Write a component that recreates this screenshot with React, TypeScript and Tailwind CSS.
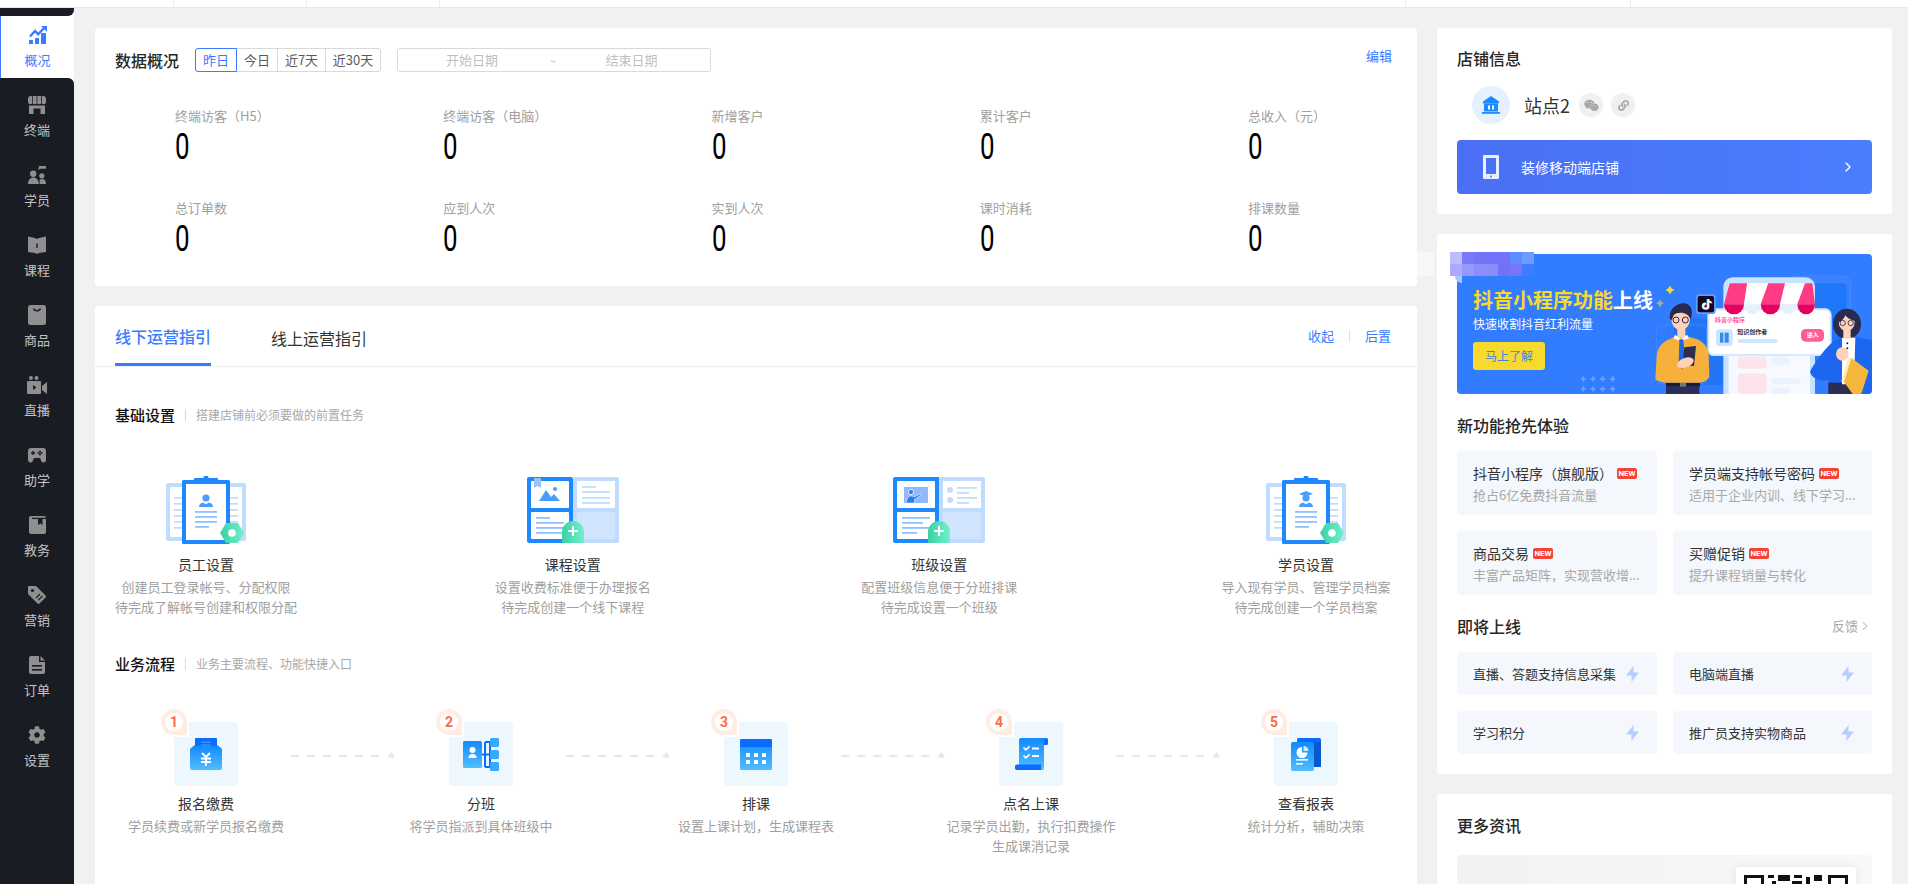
import { ChevronRight } from "lucide-react";
import { FaCog, FaLink, FaTiktok, FaWeixin } from "react-icons/fa";

const fontStack = "font-['Noto_Sans_CJK_SC','Noto_Sans',sans-serif]";
const dark = "#1a1c23";

const TopIcon = () => (
  <svg width="18" height="18" viewBox="0 0 18 18" fill="#3a7bff">
    <rect x="0" y="14" width="4" height="4" rx="0.5" />
    <rect x="6" y="12" width="4" height="6" rx="0.5" />
    <rect x="12" y="7" width="5" height="11" rx="0.5" />
    <path d="M1 10.5 6 5l3.2 3.2L15 2" fill="none" stroke="#3a7bff" strokeWidth="2.4" />
    <path d="M12 0h6v6z" />
  </svg>
);

const navIcons: Record<string, React.ReactNode> = {
  终端: (
    <svg width="18" height="18" viewBox="0 0 18 18" fill="#8f8f8f">
      <path d="M3 0h12a3 3 0 0 1 3 3v3a2.2 2.2 0 0 1-4.5 0 2.2 2.2 0 0 1-4.5 0 2.2 2.2 0 0 1-4.5 0A2.2 2.2 0 0 1 0 6V3a3 3 0 0 1 3-3z" />
      <path d="M4.5 0v6M9 0v6M13.5 0v6" stroke={dark} strokeWidth="0.8" />
      <path d="M1 9.5h16V18h-4.5v-5.5h-7V18H1z" />
    </svg>
  ),
  学员: (
    <svg width="18" height="18" viewBox="0 0 18 18" fill="#8f8f8f">
      <circle cx="5.2" cy="7.8" r="3.2" />
      <path d="M0 18c0-4 2.4-6.5 5.4-6.5s5.4 2.5 5.4 6.5z" />
      <circle cx="13.8" cy="9.8" r="2.6" />
      <path d="M11.5 18c.4-2 .2-3.4-.2-4 1.6-1.2 3.8-1.2 5.2-.3.9.8 1.4 2.4 1.5 4.3z" />
      <path d="M11 0h7v2.8h-5.5L10.300 4z" />
    </svg>
  ),
  课程: (
    <svg width="18" height="18" viewBox="0 0 18 18" fill="#8f8f8f">
      <path d="M0 0.500 7 2l2 1 2-1 7-1.500V16l-7 1-2 1-2-1-7-1z" />
      <rect x="8.300" y="7.500" width="1.400" height="4.500" fill={dark} />
    </svg>
  ),
  商品: (
    <svg width="18" height="20" viewBox="0 0 18 20" fill="#8f8f8f">
      <rect width="18" height="20" rx="2.500" />
      <path d="M5.500 3.500c1 3 6 3 7 0" fill="none" stroke={dark} strokeWidth="1.400" />
    </svg>
  ),
  直播: (
    <svg width="20" height="18" viewBox="0 0 20 18" fill="#8f8f8f">
      <circle cx="4" cy="2" r="2" />
      <circle cx="9.500" cy="2" r="2" />
      <rect y="5" width="14" height="13" rx="1" />
      <path d="M15 10l5-4v12l-5-4z" />
      <path d="M6 9l3.500 2.500L6 14z" fill={dark} />
    </svg>
  ),
  助学: (
    <svg width="18" height="15" viewBox="0 0 18 15" fill="#8f8f8f">
      <path d="M3 0h12a3 3 0 0 1 3 3v9a2.500 2.500 0 0 1-4.700 1.200L12 10H6l-1.300 3.200A2.500 2.500 0 0 1 0 12V3a3 3 0 0 1 3-3z" />
      <path d="M5 3v4M3 5h4" stroke={dark} strokeWidth="1.300" />
      <circle cx="12" cy="3.500" r="1" fill={dark} />
      <circle cx="12" cy="6.500" r="1" fill={dark} />
      <circle cx="10.500" cy="5" r="1" fill={dark} />
      <circle cx="13.500" cy="5" r="1" fill={dark} />
    </svg>
  ),
  教务: (
    <svg width="17" height="18" viewBox="0 0 17 18" fill="#8f8f8f">
      <rect width="17" height="18" rx="2" />
      <path d="M3 2.400h14" stroke={dark} strokeWidth="1.300" />
      <path d="M9 3h4.500v6l-2.200-1.500L9 9z" fill={dark} />
    </svg>
  ),
  营销: (
    <svg width="18" height="18" viewBox="0 0 18 18" fill="#8f8f8f">
      <path d="M1 0h7l9.500 9.500a1.500 1.500 0 0 1 0 2l-6 6a1.500 1.500 0 0 1-2 0L0 8V1a1 1 0 0 1 1-1z" />
      <circle cx="4.500" cy="4.500" r="1.600" fill={dark} />
      <path d="M8 12l4-4M10.500 14l4-4" stroke={dark} strokeWidth="1.100" />
    </svg>
  ),
  订单: (
    <svg width="16" height="18" viewBox="0 0 16 18" fill="#8f8f8f">
      <path d="M0 2a2 2 0 0 1 2-2h8v6h6v10a2 2 0 0 1-2 2H2a2 2 0 0 1-2-2z" />
      <path d="M11.500 0 16 4.500h-4.500z" />
      <rect x="3" y="9" width="10" height="1.600" fill={dark} />
      <rect x="3" y="13" width="10" height="1.600" fill={dark} />
    </svg>
  ),
  设置: <FaCog size={18} color="#8f8f8f" />,
};

const Sidebar = () => (
  <aside className="w-[74px] shrink-0 flex flex-col bg-white">
    <div className="h-2 bg-[#1a1c23] rounded-br-[6px]" />
    <div className="h-[62px] border-l border-[#3a7bff] bg-white flex flex-col items-center pt-[10px]">
      <div className="h-[18px] flex items-center justify-center">
        <TopIcon />
      </div>
      <span className="mt-[6px] text-[13px] leading-5 text-[#3a7bff]">概况</span>
    </div>
    <div className="flex-1 bg-[#1a1c23] rounded-tr-[6px] pt-2 flex flex-col gap-2">
      {Object.keys(navIcons).map((name) => (
        <div key={name} className="h-[62px] flex flex-col items-center pt-[10px]">
          <div className="h-[18px] flex items-center justify-center">{navIcons[name]}</div>
          <span className="mt-[6px] text-[13px] leading-5 text-[#c4c4c4]">{name}</span>
        </div>
      ))}
    </div>
  </aside>
);

const TopBar = () => (
  <div className="h-2 shrink-0 bg-white border-b border-[#e8e8e8] flex">
    <div className="w-[174px] border-r border-[#eeeeee]" />
    <div className="w-[133px] border-r border-[#eeeeee]" />
    <div className="w-[133px] border-r border-[#eeeeee]" />
    <div className="w-[966px] border-r border-[#eeeeee]" />
    <div className="w-[225px] border-r border-[#eeeeee]" />
  </div>
);

const metrics = [
  "终端访客（H5）",
  "终端访客（电脑）",
  "新增客户",
  "累计客户",
  "总收入（元）",
  "总订单数",
  "应到人次",
  "实到人次",
  "课时消耗",
  "排课数量",
];

const DataCard = () => (
  <section className="bg-white rounded-[4px] pt-5 pb-[29px] px-5">
    <div className="flex items-center h-6 relative">
      <h2 className="text-base font-medium text-[#262626] w-20">数据概况</h2>
      <div className="flex text-[13px] text-[#595959] h-6">
        <button className="w-[42px] border border-[#3a7bff] rounded-l-[3px] text-[#3a7bff]">昨日</button>
        <button className="w-[41px] border-y border-r border-[#d9d9d9]">今日</button>
        <button className="w-[48px] border-y border-r border-[#d9d9d9]">近7天</button>
        <button className="w-[55px] border-y border-r border-[#d9d9d9] rounded-r-[3px]">近30天</button>
      </div>
      <div className="ml-4 w-[314px] h-6 border border-[#d9d9d9] rounded-[3px] text-[13px] text-[#bfbfbf] flex items-center">
        <span className="ml-12 w-[53px]">开始日期</span>
        <span className="ml-[51px] text-[10px]">~</span>
        <span className="ml-[50px]">结束日期</span>
      </div>
      <a className="absolute right-[5px] top-[-2px] text-[13px] leading-5 text-[#3a7bff]">编辑</a>
    </div>
    <div className="pt-[34px] pl-[60px] grid grid-cols-[repeat(4,268.250px)_1fr] gap-y-[33px]">
      {metrics.map((m) => (
        <div key={m} className="h-[59px]">
          <div className="text-[13px] leading-5 text-[#a0a0a0]">{m}</div>
          <div className="mt-[3px] h-9 leading-9 text-[36px] text-black font-['Roboto',sans-serif] origin-left scale-x-[0.72]">
            0
          </div>
        </div>
      ))}
    </div>
  </section>
);

const BackPages = () => (
  <>
    <rect x="0" y="7" width="80" height="58" rx="2" fill="#bfdcff" />
    <rect x="4" y="11" width="72" height="50" rx="1" fill="#fff" />
    {[21, 27, 33, 39, 45, 51].map((y) => (
      <g key={y}>
        <rect x="8" y={y} width="9" height="1.700" fill="#bfdcff" />
        <rect x="64" y={y} width="8" height="1.700" fill="#bfdcff" />
      </g>
    ))}
  </>
);

const Clipboard = ({ id, cap }: { id: string; cap?: boolean }) => (
  <svg width="80" height="68" viewBox="0 0 80 68">
    <defs>
      <linearGradient id={id} x1="0" x2="1" y1="0" y2="0">
        <stop offset="0" stopColor="#3cd0a4" />
        <stop offset="1" stopColor="#70f0cc" />
      </linearGradient>
    </defs>
    <BackPages />
    <rect x="16" y="4" width="48" height="64" rx="1.500" fill="#1e88ff" />
    <rect x="20" y="8" width="40" height="56" fill="#fff" />
    <path d="M28 4V3a1 1 0 0 1 1-1h8.500a2.500 2.500 0 0 1 5 0H51a1 1 0 0 1 1 1v1z" fill="#1e88ff" />
    <circle cx="40" cy="22" r="3.600" fill="#4a9cff" />
    <path d="M33 31c0-3 2-4 4.500-4.500l2.500 2 2.500-2c2.500.5 4.500 1.500 4.500 4.500z" fill="#4a9cff" />
    {cap && <path d="M33 18l7-3 7 3-7 2.500z" fill="#4a9cff" />}
    {[35, 40, 45].map((y) => (
      <rect key={y} x="29" y={y} width="22" height="1.800" fill="#8fc0ff" />
    ))}
    <rect x="29" y="50" width="14" height="1.800" fill="#8fc0ff" />
    <path d="M54 57l6-10h12l6 10-6 10H60z" fill={`url(#${id})`} />
    <circle cx="66" cy="57" r="3.800" fill="#fff" />
  </svg>
);

const PlusTab = ({ id }: { id: string }) => (
  <>
    <defs>
      <linearGradient id={id} x1="0" x2="1" y1="0" y2="0">
        <stop offset="0" stopColor="#3cd0a4" />
        <stop offset="1" stopColor="#70f0cc" />
      </linearGradient>
    </defs>
    <path d="M35 66V55a11 11 0 0 1 22 0v11z" fill={`url(#${id})`} />
    <path d="M46 49v10M41 54h10" stroke="#fff" strokeWidth="2" />
  </>
);

const CourseArt = () => (
  <svg width="92" height="66" viewBox="0 0 92 66">
    <rect x="46" width="46" height="66" rx="2" fill="#bfdcff" />
    <rect x="50" y="4" width="38" height="27" fill="#fff" />
    <rect x="50" y="35" width="38" height="27" fill="#d2e5ff" />
    {[14, 20, 25].map((y) => (
      <rect key={y} x="55" y={y} width="28" height="1.800" fill="#bfdcff" />
    ))}
    <rect x="55" y="9" width="14" height="1.800" fill="#bfdcff" />
    <path d="M2 0h42a2 2 0 0 1 2 2v64H2a2 2 0 0 1-2-2V2a2 2 0 0 1 2-2z" fill="#1e88ff" />
    <rect x="4" y="4" width="38" height="27" rx="1" fill="#fff" />
    <rect x="4" y="35" width="38" height="27" rx="1" fill="#fff" />
    <path d="M7 1h7v10l-3.500-2L7 11z" fill="#96c4ff" />
    <path d="M12 24l7-11 5 7 3-3 6 7z" fill="#4a9cff" />
    <circle cx="28" cy="12" r="2" fill="#4a9cff" />
    <rect x="9" y="40" width="14" height="1.800" fill="#8fc0ff" />
    {[45, 50, 55].map((y) => (
      <rect key={y} x="9" y={y} width="28" height="1.800" fill="#8fc0ff" />
    ))}
    <PlusTab id="tabA" />
  </svg>
);

const ClassArt = () => (
  <svg width="92" height="66" viewBox="0 0 92 66">
    <rect x="46" width="46" height="66" rx="2" fill="#bfdcff" />
    <rect x="50" y="4" width="38" height="27" fill="#fff" />
    <rect x="50" y="35" width="38" height="27" fill="#d2e5ff" />
    <circle cx="57" cy="13" r="3" fill="#bfdcff" />
    <circle cx="57" cy="23" r="3" fill="#bfdcff" />
    <rect x="64" y="10" width="20" height="1.800" fill="#bfdcff" />
    <rect x="64" y="15" width="12" height="1.800" fill="#bfdcff" />
    <rect x="64" y="20" width="20" height="1.800" fill="#bfdcff" />
    <rect x="64" y="25" width="12" height="1.800" fill="#bfdcff" />
    <path d="M2 0h44v66H2a2 2 0 0 1-2-2V2a2 2 0 0 1 2-2z" fill="#1e88ff" />
    <rect x="4" y="4" width="38" height="27" rx="1" fill="#fff" />
    <rect x="4" y="35" width="38" height="27" rx="1" fill="#fff" />
    <rect x="11" y="10" width="24" height="16" fill="#8fbaff" />
    <circle cx="18" cy="15" r="2.600" fill="#2d7dea" stroke="#fff" strokeWidth="0.800" />
    <path d="M13 26l2-6c2-1.500 5-1.500 6 0l6-3 .8 1.200-6.300 4.300V26z" fill="#2d7dea" stroke="#fff" strokeWidth="0.500" />
    <rect x="9" y="40" width="28" height="1.800" fill="#8fc0ff" />
    <rect x="9" y="45" width="21" height="1.800" fill="#8fc0ff" />
    <rect x="9" y="50" width="28" height="1.800" fill="#8fc0ff" />
    <rect x="9" y="55" width="15" height="1.800" fill="#8fc0ff" />
    <PlusTab id="tabB" />
  </svg>
);

const setupSteps = [
  { title: "员工设置", lines: ["创建员工登录帐号、分配权限", "待完成了解帐号创建和权限分配"], art: <Clipboard id="hexA" /> },
  { title: "课程设置", lines: ["设置收费标准便于办理报名", "待完成创建一个线下课程"], art: <CourseArt /> },
  { title: "班级设置", lines: ["配置班级信息便于分班排课", "待完成设置一个班级"], art: <ClassArt /> },
  { title: "学员设置", lines: ["导入现有学员、管理学员档案", "待完成创建一个学员档案"], art: <Clipboard id="hexB" cap /> },
];

const GradDefs = ({ id }: { id: string }) => (
  <defs>
    <linearGradient id={id} x1="0" x2="0" y1="0" y2="1">
      <stop offset="0" stopColor="#128aff" />
      <stop offset="1" stopColor="#52bdff" />
    </linearGradient>
  </defs>
);

const flowIcons = [
  <svg width="32" height="32" viewBox="0 0 32 32" key="pay">
    <GradDefs id="fa" />
    <path d="M5 1a1 1 0 0 1 1-1h20a1 1 0 0 1 1 1v9H5z" fill="#0a6bff" />
    <rect x="11" y="3.500" width="10" height="1.400" fill="#4a94ff" />
    <rect x="11" y="6.500" width="10" height="1.400" fill="#4a94ff" />
    <path d="M0 11l4-3.500h24l4 3.500v19a2 2 0 0 1-2 2H2a2 2 0 0 1-2-2z" fill="url(#fa)" />
    <path d="M12 15l4 4 4-4M11 20.500h10M11 24h10M16 19v9" stroke="#fff" strokeWidth="1.900" fill="none" />
  </svg>,
  <svg width="36" height="33" viewBox="0 0 36 33" key="group">
    <GradDefs id="fb" />
    <rect x="0" y="3" width="19" height="27" rx="1.500" fill="url(#fb)" />
    <circle cx="9.500" cy="12" r="3" fill="#fff" />
    <path d="M5.500 20c0-3 1.500-4 4-4s4 1 4 4z" fill="#fff" />
    <path d="M19 16.500h8M27 5v24M22 4v25M22 4h5M22 29h5M22 16.500h5" stroke="#0a6bff" strokeWidth="2" fill="none" />
    <rect x="27" y="0" width="9" height="9" rx="1.500" fill="#36a9ff" />
    <rect x="27" y="12" width="9" height="9" rx="1.500" fill="#36a9ff" />
    <rect x="27" y="24" width="9" height="9" rx="1.500" fill="#36a9ff" />
  </svg>,
  <svg width="32" height="31" viewBox="0 0 32 31" key="cal">
    <GradDefs id="fc" />
    <rect width="32" height="31" rx="1.500" fill="url(#fc)" />
    <path d="M1.500 0h29A1.500 1.500 0 0 1 32 1.500V8H0V1.500A1.500 1.500 0 0 1 1.500 0z" fill="#0a6bff" />
    {[6, 14, 22].map((x) => (
      <g key={x} fill="#fff">
        <rect x={x} y="14" width="4" height="4" />
        <rect x={x} y="21" width="4" height="4" />
      </g>
    ))}
  </svg>,
  <svg width="33" height="32" viewBox="0 0 33 32" key="roll">
    <GradDefs id="fd" />
    <rect x="28" y="0" width="5" height="7" rx="1.500" fill="#0a6bff" />
    <path d="M4 2a2 2 0 0 1 2-2h25v.500A3 3 0 0 0 29 3v27a2 2 0 0 1-2 2H4z" fill="url(#fd)" />
    <path d="M2 26.500h24v5.500H2a2 2 0 0 1-2-2.700 2.500 2.500 0 0 1 2-2.800z" fill="#0a6bff" />
    <path d="M8.500 9.500l2.300 2.300 3.800-3.400M8.500 17.500l2.300 2.300 3.800-3.400" stroke="#fff" strokeWidth="1.700" fill="none" />
    <rect x="17" y="9.500" width="7" height="2" fill="#fff" />
    <rect x="17" y="17" width="7" height="2" fill="#fff" />
  </svg>,
  <svg width="30" height="33" viewBox="0 0 30 33" key="report">
    <GradDefs id="fe" />
    <rect x="6" y="0" width="24" height="29" rx="1.500" fill="#0a6bff" />
    <rect x="22" y="4" width="8" height="25" rx="1" fill="#0757cf" />
    <rect x="0" y="4" width="23" height="29" rx="2" fill="url(#fe)" />
    <path d="M11 9a5.500 5.500 0 1 0 5.500 5.500H11z" fill="#fff" />
    <path d="M12.500 8a5 5 0 0 1 5 5h-5z" fill="#cfe9ff" />
    <rect x="5" y="21" width="12" height="1.600" fill="#fff" />
    <rect x="5" y="25" width="7" height="1.600" fill="#fff" />
  </svg>,
];

const flowSteps = [
  { title: "报名缴费", lines: ["学员续费或新学员报名缴费"] },
  { title: "分班", lines: ["将学员指派到具体班级中"] },
  { title: "排课", lines: ["设置上课计划，生成课程表"] },
  { title: "点名上课", lines: ["记录学员出勤，执行扣费操作", "生成课消记录"] },
  { title: "查看报表", lines: ["统计分析，辅助决策"] },
];

const FlowArrow = () => (
  <svg width="105" height="8" viewBox="0 0 105 8" className="mt-[29px] shrink-0" fill="#e6e6e6">
    {[0, 16, 32, 48, 64, 80].map((x) => (
      <rect key={x} x={x} y="4" width="8" height="2" />
    ))}
    <path d="M96 6.500h8L100.500 1z" />
  </svg>
);

const SectionTitle = ({ title, sub }: { title: string; sub: string }) => (
  <div className="flex items-center h-5">
    <h3 className="text-[15px] font-medium text-[#111111]">{title}</h3>
    <span className="w-px h-3 mx-[10px] bg-[#d9d9d9]" />
    <span className="text-xs text-[#a8a8a8]">{sub}</span>
  </div>
);

const GuideCard = () => (
  <section className="flex-1 bg-white rounded-t-[4px]">
    <div className="relative flex px-5 h-[61px] border-b border-[#eeeeee]">
      <div className="h-[60px] pt-[3px] flex items-center border-b-[3px] border-[#3a7bff] text-base font-medium text-[#3a7bff]">
        线下运营指引
      </div>
      <div className="ml-[60px] h-[60px] pt-[3px] flex items-center text-base text-[#333333]">线上运营指引</div>
      <div className="ml-auto mr-[6px] flex items-center text-[13px] text-[#3a7bff]">
        <span>收起</span>
        <span className="w-px h-3 mx-[15px] bg-[#e0e0e0]" />
        <span>后置</span>
      </div>
    </div>
    <div className="px-5 pt-[38px]">
      <SectionTitle title="基础设置" sub="搭建店铺前必须要做的前置任务" />
      <div className="mt-[51px] flex justify-between w-[1282px]">
        {setupSteps.map((s) => (
          <div key={s.title} className="w-[182px] flex flex-col items-center text-center">
            <div className="h-[68px] flex items-center">{s.art}</div>
            <div className="mt-[10px] text-sm leading-5 text-[#333333]">{s.title}</div>
            <div className="mt-[3px] text-[13px] leading-5 text-[#a0a0a0]">
              {s.lines.map((l) => (
                <div key={l}>{l}</div>
              ))}
            </div>
          </div>
        ))}
      </div>
      <div className="mt-[37px]">
        <SectionTitle title="业务流程" sub="业务主要流程、功能快捷入口" />
      </div>
      <div className="mt-[48px] pl-[6px] flex items-start">
        {flowSteps.map((s, i) => (
          <div key={s.title} className="flex items-start">
            <div className="w-[170px] flex flex-col items-center text-center">
              <div className="relative w-16 h-16 rounded-[4px] bg-[#edf7fe] flex items-center justify-center">
                <div className="absolute -left-[13px] -top-[13px] w-[26px] h-[26px] rounded-[50%_50%_0_50%] bg-[#ffece3] shadow-[2px_2px_0_0_#ffffff] flex items-center justify-center">
                  <span className="w-[18px] h-[18px] rounded-full bg-white flex items-center justify-center font-['Roboto',sans-serif] font-bold text-sm leading-none text-[#ff6b3d]">
                    {i + 1}
                  </span>
                </div>
                {flowIcons[i]}
              </div>
              <div className="mt-[7px] text-sm leading-5 text-[#333333]">{s.title}</div>
              <div className="mt-[3px] text-[13px] leading-5 text-[#a0a0a0]">
                {s.lines.map((l) => (
                  <div key={l}>{l}</div>
                ))}
              </div>
            </div>
            {i < 4 && <FlowArrow />}
          </div>
        ))}
      </div>
    </div>
  </section>
);

const StoreCard = () => (
  <section className="h-[186px] shrink-0 bg-white rounded-[4px] px-5 pt-[18px]">
    <h2 className="text-base leading-6 font-medium text-[#262626]">店铺信息</h2>
    <div className="mt-[16px] pl-[15px] flex items-center h-[38px]">
      <div className="w-[38px] h-[38px] rounded-full bg-[#e6f0fe] flex items-center justify-center">
        <svg width="18" height="18" viewBox="0 0 18 18" fill="#1a8cff">
          <path d="M9 0l8 5.500v2H1v-2z" />
          <rect x="2" y="7.500" width="14" height="8" />
          <rect x="6" y="9.500" width="2" height="4" fill="#fff" />
          <rect x="10" y="9.500" width="2" height="4" fill="#fff" />
          <rect y="16" width="18" height="1.800" />
        </svg>
      </div>
      <span className="ml-[14px] text-lg text-[#333333]">站点2</span>
      <span className="ml-[9px] w-6 h-6 rounded-full bg-[#f0f0f0] flex items-center justify-center">
        <FaWeixin size={15} color="#a6a6a6" />
      </span>
      <span className="ml-2 w-6 h-6 rounded-full bg-[#f0f0f0] flex items-center justify-center">
        <FaLink size={11} color="#a6a6a6" />
      </span>
    </div>
    <div className="mt-[16px] h-[54px] rounded-[4px] bg-linear-to-r from-[#4a6ff3] to-[#4a7dff] flex items-center pl-[26px] pr-4">
      <svg width="16" height="24" viewBox="0 0 16 24">
        <rect width="16" height="24" rx="1" fill="#e6f0ff" />
        <rect x="3" y="3" width="10" height="16" fill="#4a72f5" />
        <circle cx="8" cy="21.500" r="1" fill="#4a72f5" />
      </svg>
      <span className="ml-[22px] text-sm text-white">装修移动端店铺</span>
      <ChevronRight size={16} strokeWidth={2} className="ml-auto text-white" />
    </div>
  </section>
);

const mosaic = [
  "bg-[#bcbcfe]",
  "bg-[#7a7af9]",
  "bg-[#7474f7]",
  "bg-[#7272f8]",
  "bg-[#7171f9]",
  "bg-[#5c8cff]",
  "bg-[#6d9bff]",
  "bg-[#a9a9fd]",
  "bg-[#9898fc]",
  "bg-[#8e8efb]",
  "bg-[#8b8bfa]",
  "bg-[#7171f6]",
  "bg-[#7676f7]",
  "bg-[#3e7dff]",
];

const Scallop = ({ x, w, fill }: { x: number; w: number; fill: string }) => (
  <path d={`M${x} 193a${w / 2} 30 0 0 0 ${w} 0z`} fill={fill} />
);

const BannerArt = () => (
  <svg viewBox="51 42 1245 420" className="absolute inset-0 w-full h-full" fontFamily="'Noto Sans CJK SC',sans-serif">
    <rect x="1040" y="108" width="192" height="225" rx="22" fill="#3a82ff" stroke="#4d8fff" strokeWidth="2" />
    <rect x="1060" y="130" width="160" height="180" rx="10" fill="#1f78fa" />
    <rect x="700" y="235" width="160" height="200" rx="14" fill="#2475f5" />
    <rect x="650" y="255" width="150" height="175" rx="14" fill="none" stroke="#4a8dff" strokeWidth="2" />
    {[417, 447].map((y) =>
      [430, 459, 488, 518].map((x) => (
        <path key={`${x}-${y}`} d={`M${x - 8} ${y}h16M${x} ${y - 8}v16`} stroke="#6ea3ff" strokeWidth="5" />
      )),
    )}
    <path d="M690 136q3 11 14 14-11 3-14 14-3-11-14-14 11-3 14-14z" fill="#f8d92e" />
    <path d="M660 177q2.500 10 13 13-10.500 2.500-13 13-2.500-10.500-13-13 10.500-3 13-13z" fill="#a7b08c" />
    <path d="M850 462V140a28 28 0 0 1 28-28h219a28 28 0 0 1 28 28v322z" fill="#c9e2ff" />
    <rect x="866" y="130" width="244" height="332" fill="#f6faff" />
    <rect x="893" y="350" width="87" height="36" rx="10" fill="#fde4ec" />
    <rect x="993" y="352" width="56" height="22" rx="8" fill="#eaf2fb" />
    <rect x="893" y="400" width="87" height="62" rx="10" fill="#fde4ec" />
    <rect x="993" y="414" width="88" height="18" rx="9" fill="#eaf2fb" />
    <rect x="993" y="443" width="56" height="18" rx="9" fill="#eaf2fb" />
    <rect x="805" y="208" width="367" height="137" rx="16" fill="#fff" stroke="#d4e8ff" strokeWidth="6" />
    <path d="M869 130h53l-10 63h-60z" fill="#ff3b86" />
    <path d="M922 130h63l-23 63h-50z" fill="#fff" />
    <path d="M985 130h50l15 63h-88z" fill="#ff3b86" />
    <path d="M1035 130h60l-23 63h-52z" fill="#fff" />
    <path d="M1095 130h22l8 63h-53z" fill="#ff3b86" />
    <Scallop x={852} w={60} fill="#e6005f" />
    <Scallop x={912} w={50} fill="#e6f1fb" />
    <Scallop x={962} w={58} fill="#e6005f" />
    <Scallop x={1020} w={52} fill="#e6f1fb" />
    <Scallop x={1072} w={53} fill="#e6005f" />
    <text x="825" y="246" fontSize="18" fontWeight="700" fill="#ff4d94">
      抖音小程序
    </text>
    <rect x="828" y="268" width="50" height="50" rx="10" fill="#cfe4fb" />
    <path d="M840 278h26v30h-26z" fill="#2f8bf0" />
    <path d="M852 278v30" stroke="#fff" strokeWidth="3" />
    <text x="892" y="283" fontSize="18" fontWeight="700" fill="#333333">
      知识创作者
    </text>
    <rect x="893" y="297" width="119" height="12" rx="6" fill="#cfe6fb" />
    <rect x="1083" y="267" width="69" height="38" rx="14" fill="#ff5c98" />
    <text x="1100" y="292" fontSize="18" fontWeight="700" fill="#fff">
      进入
    </text>
    <rect x="768" y="163" width="59" height="59" rx="9" fill="#5aa0ff" />
    <rect x="773" y="168" width="49" height="49" rx="6" fill="#16071f" />
    <FaTiktok x={783} y={176} size={32} color="#25f4ee" />
    <FaTiktok x={787} y={178} size={32} color="#fe2c55" />
    <FaTiktok x={785} y={177} size={32} color="#ffffff" />
    <rect x="678" y="440" width="100" height="22" fill="#2b2d52" />
    <rect x="678" y="428" width="102" height="12" fill="#1c1c2e" />
    <rect x="720" y="428" width="18" height="12" fill="#777777" />
    <path d="M706 292C670 300 652 320 650 350l-4 68q14 10 32 10h102q20-3 28-18l-2-65c-2-30-21-47-61-55z" fill="#f7b03b" />
    <rect x="712" y="262" width="24" height="30" fill="#ffd2b8" />
    <path d="M705 284l18 13 18-13 6 11-24 9-23-9z" fill="#fff" />
    <path d="M718 298h12l6 72-10 18-10-18z" fill="#1b68e8" />
    <ellipse cx="722" cy="238" rx="28" ry="32" fill="#ffd2b8" />
    <path d="M690 238c-5-35 25-50 45-48 20 2 25 30 17 48-7-16-22-23-42-18-8 2-12 10-14 20z" fill="#28294f" />
    <circle cx="708" cy="240" r="9" fill="none" stroke="#28294f" strokeWidth="3" />
    <circle cx="736" cy="240" r="9" fill="none" stroke="#28294f" strokeWidth="3" />
    <path d="M733 322l35-4-6 60-34-4z" fill="#2b2d52" />
    <ellipse cx="736" cy="368" rx="26" ry="14" transform="rotate(-20 736 368)" fill="#ffd2b8" />
    <ellipse cx="1221" cy="252" rx="42" ry="46" fill="#2a2b4f" />
    <path d="M1195 295c-30 15-65 65-85 100 5 20 30 30 55 25v42h131V300q-26-5-51-10z" fill="#1c66f0" />
    <rect x="1165" y="428" width="100" height="34" fill="#2b2d52" />
    <path d="M1206 293h40l-4 140h-36z" fill="#fff" />
    <circle cx="1222" cy="310" r="3" fill="#222222" />
    <circle cx="1222" cy="325" r="3" fill="#222222" />
    <rect x="1210" y="268" width="22" height="28" fill="#ffd2b8" />
    <ellipse cx="1220" cy="246" rx="24" ry="28" fill="#ffd2b8" />
    <path d="M1194 248c0-28 15-38 32-38 18 0 26 15 22 34-10-2-25-8-32-18-3 10-12 18-22 22z" fill="#2a2b4f" />
    <circle cx="1208" cy="249" r="8" fill="none" stroke="#2a2b4f" strokeWidth="2.500" />
    <circle cx="1232" cy="249" r="8" fill="none" stroke="#2a2b4f" strokeWidth="2.500" />
    <ellipse cx="1207" cy="342" rx="19" ry="20" fill="#ffd2b8" />
    <path d="M1226 350l8 4-22 76-8-6z" fill="#ffeeb0" />
    <path d="M1234 354l52 38-22 70h-26l-26-36z" fill="#f4b63c" />
  </svg>
);

const PromoBanner = () => (
  <div className="relative h-[140px] rounded-[4px] bg-[#317cff] overflow-visible">
    <div className="absolute inset-0 rounded-[4px] overflow-hidden">
      <BannerArt />
    </div>
    <div className="absolute -left-[7px] -top-[2px] grid grid-cols-[repeat(7,12px)]">
      {mosaic.map((c, i) => (
        <span key={i} className={`h-3 ${c}`} />
      ))}
      <span className="h-[7px] w-[7px] ml-[5px] mt-0 rounded-bl-[7px] bg-[#a9c6ff]" />
    </div>
    <div className="absolute -left-[40px] top-[-2px] w-[17px] h-6 bg-[#f7f7f9]" />
    <div className="relative pl-4 pt-[34px]">
      <div className="text-xl leading-6 font-bold text-[#f8d92e]">
        抖音小程序功能<span className="text-white">上线</span>
      </div>
      <div className="mt-1 text-xs leading-4 text-white">快速收割抖音红利流量</div>
      <div className="mt-[10px] w-[72px] h-7 rounded-[3px] bg-[#f8d92e] text-xs text-[#4682e0] flex items-center justify-center">
        马上了解
      </div>
    </div>
  </div>
);

const Bolt = () => (
  <svg width="13" height="16" viewBox="0 0 13 16" className="shrink-0" fill="#b5cfff">
    <path d="M7.500 0v6.500H13L5.500 16V9.500H0z" />
  </svg>
);

const NewTag = () => (
  <span className="ml-1 w-5 h-[11px] rounded-[2px] bg-[#f44336] text-white text-[8px] leading-[11px] font-bold text-center font-['Roboto',sans-serif] shrink-0">
    NEW
  </span>
);

const newFeatures = [
  { title: "抖音小程序（旗舰版）", sub: "抢占6亿免费抖音流量" },
  { title: "学员端支持帐号密码", sub: "适用于企业内训、线下学习..." },
  { title: "商品交易", sub: "丰富产品矩阵，实现营收增..." },
  { title: "买赠促销", sub: "提升课程销量与转化" },
];

const comingSoon = ["直播、答题支持信息采集", "电脑端直播", "学习积分", "推广员支持实物商品"];

const FeatureCard = () => (
  <section className="h-[540px] shrink-0 bg-white rounded-[4px] px-5 pt-5">
    <PromoBanner />
    <h2 className="mt-[19px] text-base leading-6 font-medium text-[#262626]">新功能抢先体验</h2>
    <div className="mt-[14px] grid grid-cols-[200px_199px] gap-4">
      {newFeatures.map((f) => (
        <div key={f.title} className="h-16 rounded-[4px] bg-[#f4f7fc] pl-4 pt-[12px]">
          <div className="flex items-center h-5 text-sm text-[#333333]">
            {f.title}
            <NewTag />
          </div>
          <div className="mt-[2px] text-[13px] leading-5 text-[#a8a8a8]">{f.sub}</div>
        </div>
      ))}
    </div>
    <div className="mt-[19px] flex items-center h-6">
      <h2 className="text-base font-medium text-[#262626]">即将上线</h2>
      <span className="ml-auto text-[13px] text-[#a8a8a8]">反馈</span>
      <ChevronRight size={14} className="text-[#c8c8c8]" />
    </div>
    <div className="mt-[14px] grid grid-cols-[200px_199px] gap-4">
      {comingSoon.map((c) => (
        <div key={c} className="h-[43px] rounded-[4px] bg-[#f4f7fc] pl-4 pr-[18px] flex items-center justify-between text-[13px] text-[#333333]">
          {c}
          <Bolt />
        </div>
      ))}
    </div>
  </section>
);

const NewsCard = () => (
  <section className="flex-1 bg-white rounded-t-[4px] px-5 pt-[19px]">
    <h2 className="text-base leading-6 font-medium text-[#262626]">更多资讯</h2>
    <div className="mt-[18px] h-[60px] rounded-t-[4px] bg-linear-to-r from-[#f2f2f2] to-[#f8f8f8] flex justify-end pr-4 pt-3">
      <div className="w-[120px] h-12 rounded-t-[4px] bg-white shadow-[0_0_8px_rgba(0,0,0,0.08)] px-2 pt-2">
        <svg width="104" height="40" viewBox="0 0 104 40" fill="#111111">
          <path fillRule="evenodd" d="M0 0h20v20H0zM3 3v14h14V3z" />
          <path fillRule="evenodd" d="M84 0h20v20H84zM87 3v14h14V3z" />
          <rect x="24" y="0" width="6" height="3" />
          <rect x="34" y="0" width="12" height="6" />
          <rect x="50" y="0" width="8" height="3" />
          <rect x="62" y="2" width="4" height="8" />
          <rect x="70" y="0" width="8" height="6" />
          <rect x="28" y="6" width="4" height="6" />
          <rect x="48" y="6" width="10" height="4" />
        </svg>
      </div>
    </div>
  </section>
);

export default function App() {
  return (
    <div className={`h-screen w-full overflow-hidden flex flex-col bg-[#f0f1f3] ${fontStack}`}>
      <TopBar />
      <div className="flex-1 flex min-h-0">
        <Sidebar />
        <main className="flex-1 min-w-0 pl-[21px] pr-4 pt-5 flex gap-5 overflow-hidden">
          <div className="w-[1322px] shrink-0 flex flex-col gap-5">
            <DataCard />
            <GuideCard />
          </div>
          <div className="w-[455px] shrink-0 flex flex-col gap-5">
            <StoreCard />
            <FeatureCard />
            <NewsCard />
          </div>
        </main>
      </div>
    </div>
  );
}
